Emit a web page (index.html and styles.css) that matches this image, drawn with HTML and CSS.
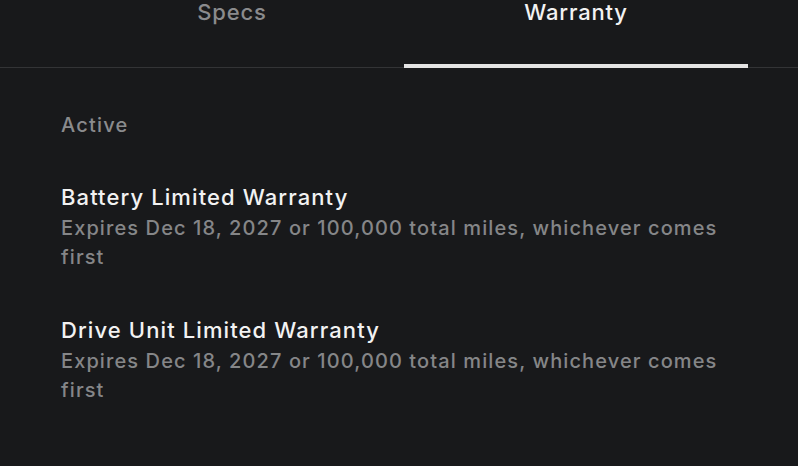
FILE: index.html
```html
<!DOCTYPE html>
<html>
<head>
<meta charset="utf-8">
<link rel="stylesheet" href="styles.css">
</head>
<body>
<div class="page">
  <nav class="tabs">
    <div class="tab">Specs</div>
    <div class="tab active">Warranty</div>
  </nav>
  <section class="content">
    <div class="section-label">Active</div>
    <div class="item">
      <div class="item-title">Battery Limited Warranty</div>
      <div class="item-sub">Expires Dec 18, 2027 or 100,000 total miles, whichever comes first</div>
    </div>
    <div class="item">
      <div class="item-title">Drive Unit Limited Warranty</div>
      <div class="item-sub">Expires Dec 18, 2027 or 100,000 total miles, whichever comes first</div>
    </div>
  </section>
</div>
</body>
</html>
```
FILE: styles.css
```css
html, body {
  margin: 0;
  padding: 0;
  background: #18191b;
}
body {
  width: 798px;
  height: 466px;
  overflow: hidden;
  font-family: Inter, "Noto Sans", sans-serif;
}
.tabs {
  display: flex;
  padding: 0 50px 0 60px;
  border-bottom: 1px solid #333436;
  margin-top: -7px;
}
.tab {
  flex: 1;
  text-align: center;
  font-size: 22px;
  font-weight: 500;
  letter-spacing: 0.8px;
  color: #8a8b8d;
  line-height: 26px;
  padding: 6px 0 39px;
  border-bottom: 4px solid transparent;
  margin-bottom: -1px;
}
.tab.active {
  color: #f2f2f2;
  border-bottom-color: #e4e4e4;
}
.content {
  padding: 44px 60px 0 61px;
}
.section-label {
  font-size: 20px;
  font-weight: 500;
  letter-spacing: 1.2px;
  color: #8a8b8d;
  line-height: 26px;
  margin-bottom: 45px;
}
.item {
  margin-bottom: 44px;
}
.item-title {
  font-size: 22px;
  font-weight: 500;
  letter-spacing: 1.1px;
  color: #f2f2f2;
  line-height: 28px;
  margin-bottom: 3px;
}
.item-sub {
  font-size: 20px;
  font-weight: 500;
  letter-spacing: 1.1px;
  color: #858688;
  line-height: 29px;
}
```
